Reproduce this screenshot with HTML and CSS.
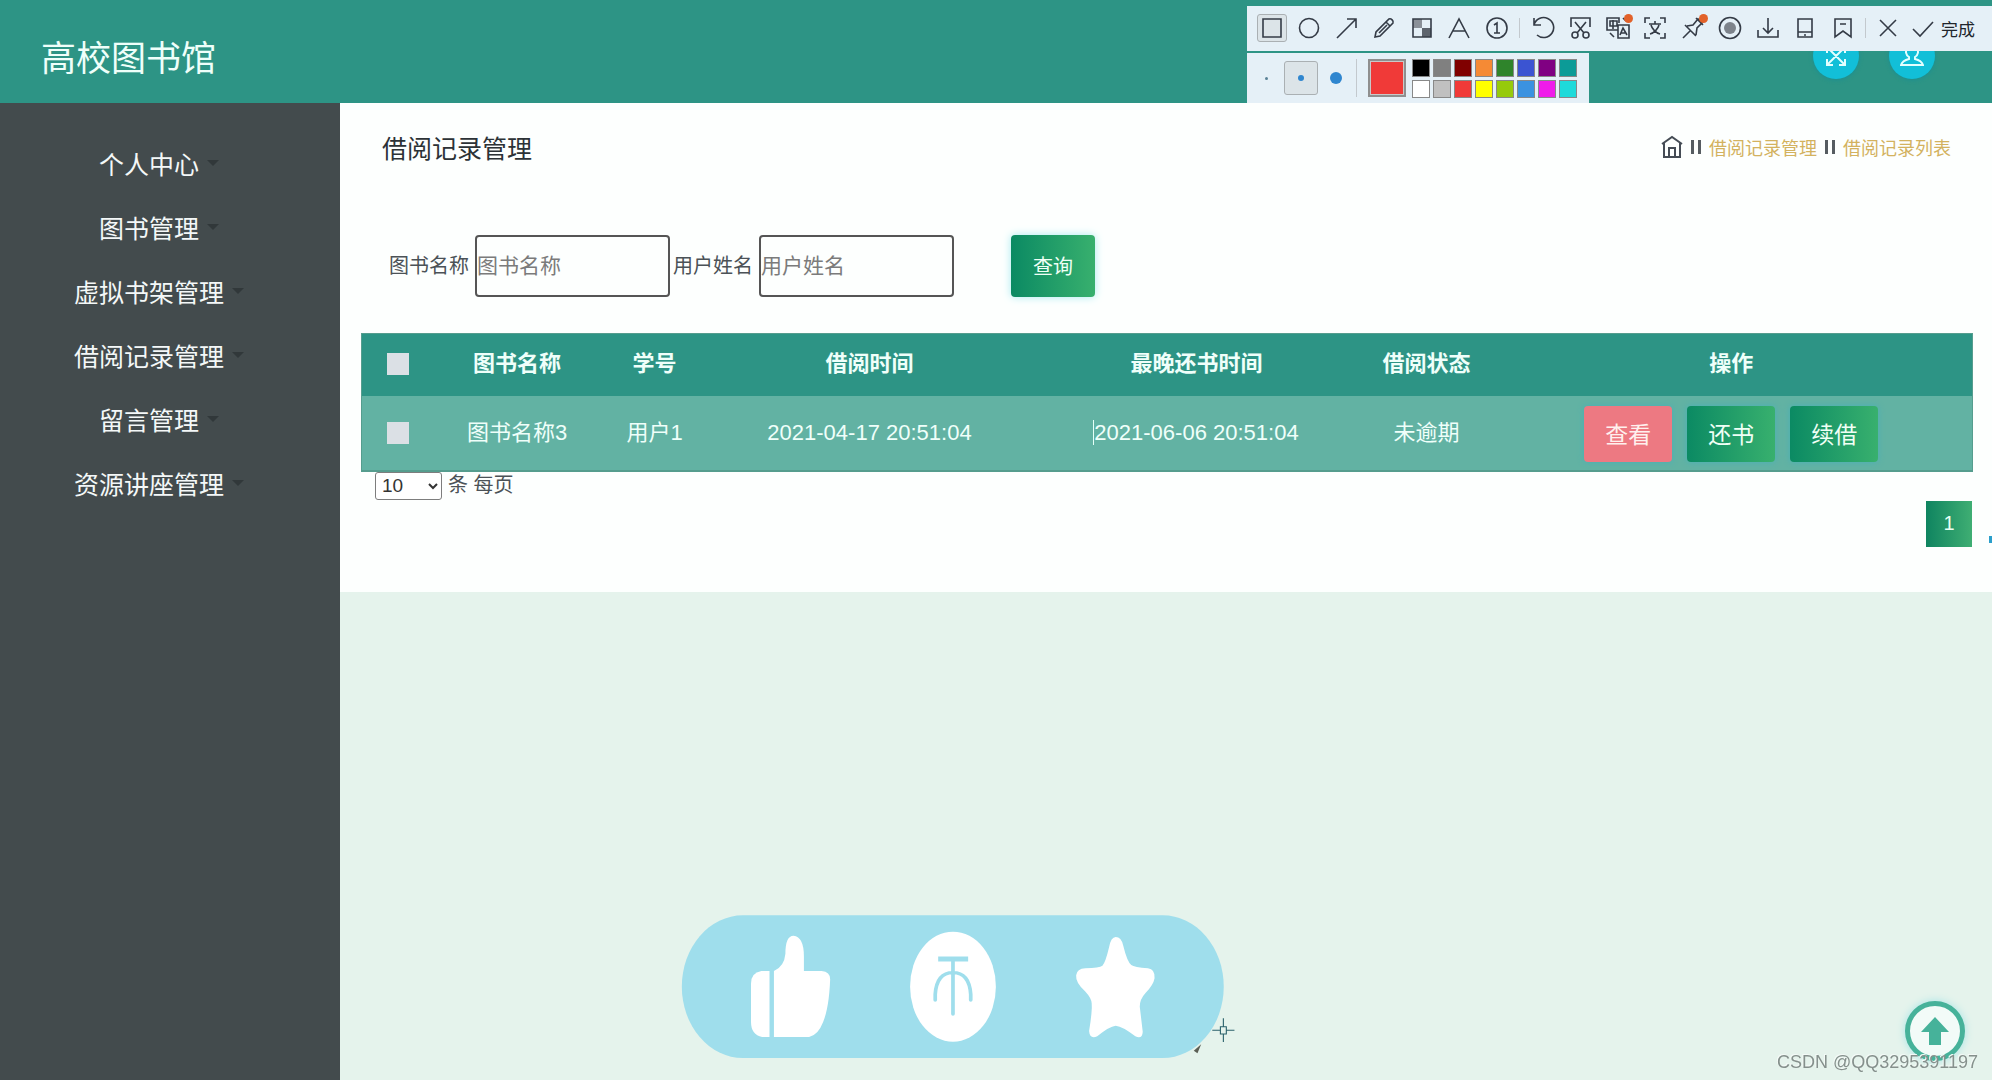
FILE: index.html
```html
<!DOCTYPE html>
<html lang="zh-CN">
<head>
<meta charset="utf-8">
<title>高校图书馆</title>
<link rel="stylesheet" href="styles.css">
</head>
<body>
<header class="topbar">
  <h1 class="brand">高校图书馆</h1>
  <div class="top-actions">
    <button class="round" type="button" aria-label="全屏"><svg width="24" height="24" viewBox="0 0 24 24"><path d="M3 3l18 18M21 3L3 21M3 9V3h6M15 3h6v6M3 15v6h6M15 21h6v-6"/></svg></button>
    <button class="round" type="button" aria-label="用户"><svg width="24" height="24" viewBox="0 0 24 24"><path d="M9 13a6 6 0 1 1 6 0v2c4 1 7 3 8 6H1c1-3 4-5 8-6z"/></svg></button>
  </div>
</header>

<div class="layout">
  <nav class="sidebar">
    <a class="menu-item" href="#">个人中心<span class="caret"></span></a>
    <a class="menu-item" href="#">图书管理<span class="caret"></span></a>
    <a class="menu-item" href="#">虚拟书架管理<span class="caret"></span></a>
    <a class="menu-item" href="#">借阅记录管理<span class="caret"></span></a>
    <a class="menu-item" href="#">留言管理<span class="caret"></span></a>
    <a class="menu-item" href="#">资源讲座管理<span class="caret"></span></a>
  </nav>

  <main class="content">
    <div class="page-head">
      <h2 class="page-title">借阅记录管理</h2>
      <div class="crumbs">
        <a class="home" href="#" aria-label="首页"><svg width="22" height="24" viewBox="0 0 22 24"><path d="M1 9L11 2l10 7M3 8v14h16V8M8 22v-9h6v9"/></svg></a>
        <span class="bar"></span>
        <a href="#">借阅记录管理</a>
        <span class="bar"></span>
        <a href="#">借阅记录列表</a>
      </div>
    </div>

    <form class="search">
      <label for="book">图书名称</label>
      <input class="field" id="book" type="text" placeholder="图书名称">
      <label for="user">用户姓名</label>
      <input class="field" id="user" type="text" placeholder="用户姓名">
      <button class="btn query" type="button">查询</button>
    </form>

    <table class="records">
      <colgroup><col class="c-check"><col class="c-book"><col class="c-no"><col class="c-start"><col class="c-due"><col class="c-state"><col class="c-ops"></colgroup>
      <thead>
        <tr>
          <th><input class="tick" type="checkbox" aria-label="全选"></th>
          <th>图书名称</th><th>学号</th><th>借阅时间</th><th>最晚还书时间</th><th>借阅状态</th><th>操作</th>
        </tr>
      </thead>
      <tbody>
        <tr>
          <td><input class="tick" type="checkbox" aria-label="选择图书名称3"></td>
          <td>图书名称3</td><td>用户1</td><td>2021-04-17 20:51:04</td>
          <td><span class="editing">2021-06-06 20:51:04</span></td>
          <td>未逾期</td>
          <td>
            <div class="ops">
              <button class="btn view" type="button">查看</button>
              <button class="btn" type="button">还书</button>
              <button class="btn" type="button">续借</button>
            </div>
          </td>
        </tr>
      </tbody>
    </table>

    <div class="page-size">
      <select id="size"><option>10</option><option>20</option><option>50</option></select>
      <label for="size">条 每页</label>
    </div>
    <div class="pager"><button class="page-no" type="button">1</button></div>
  </main>
</div>

<section class="shot-tools" aria-label="截图工具">
  <div class="tools">
    <button class="tool on" type="button" aria-label="矩形"><svg viewBox="0 0 24 24"><path d="M3 3h18v18H3z"/></svg></button>
    <button class="tool" type="button" aria-label="椭圆"><svg viewBox="0 0 24 24"><circle cx="12" cy="12" r="9.500"/></svg></button>
    <button class="tool" type="button" aria-label="箭头"><svg viewBox="0 0 24 24"><path d="M2 22L21 3M12 3h9v9"/></svg></button>
    <button class="tool" type="button" aria-label="画笔"><svg viewBox="0 0 24 24"><path d="M3 21l1-5L17 3c2-1 5 2 4 4L8 20zM14 6l4 4M7 17l8-8"/></svg></button>
    <button class="tool" type="button" aria-label="马赛克"><svg viewBox="0 0 24 24"><path class="shade" d="M3 3h9v9H3z"/><path class="dark" d="M12 12h9v9h-9z"/><path d="M3 3h18v18H3z"/></svg></button>
    <button class="tool" type="button" aria-label="文字"><svg viewBox="0 0 24 24"><path d="M2 22L12 3l10 19M6 15h12"/></svg></button>
    <button class="tool" type="button" aria-label="序号"><svg viewBox="0 0 24 24"><circle cx="12" cy="12" r="10"/><path d="M9 9l3-2v10M9 17h6"/></svg></button>
    <span class="sep"></span>
    <button class="tool" type="button" aria-label="撤销"><svg viewBox="0 0 24 24"><path d="M3 2v7h7M3 9a10 10 0 1 1 3 10"/></svg></button>
    <button class="tool" type="button" aria-label="截长图"><svg viewBox="0 0 24 24"><path d="M3 11V2h19v9M7 6l9 11M18 6L9 17"/><circle cx="7" cy="19" r="3"/><circle cx="18" cy="19" r="3"/></svg></button>
    <button class="tool" type="button" aria-label="翻译"><svg viewBox="0 0 24 24"><path d="M12 14H1V2h12v5M4 5h7v5H4zM7 4v9M12 9h11v13H12zM14 19l3-7 4 7M15 17h4M4 17l4 4M17 2l3 3"/></svg><span class="dot"></span></button>
    <button class="tool" type="button" aria-label="识别文字"><svg viewBox="0 0 24 24"><path d="M2 7V2h5M17 2h5v5M2 17v5h5M17 22h5v-5M6 8h12M12 5v3M8 9c1 4 5 8 9 9M16 9c-1 4-5 8-9 9"/></svg></button>
    <button class="tool" type="button" aria-label="钉住"><svg viewBox="0 0 24 24"><path d="M2 22l8-8M4 9l11 11M6 10l6-1 5-6 4 4-5 5-1 7M15 2l7 7"/></svg><span class="dot"></span></button>
    <button class="tool" type="button" aria-label="录屏"><svg viewBox="0 0 24 24"><circle cx="12" cy="12" r="10.500"/><circle class="solid" cx="12" cy="12" r="6"/></svg></button>
    <button class="tool" type="button" aria-label="保存"><svg viewBox="0 0 24 24"><path d="M12 2v14M7 12l5 5 5-5M2 14v7h20v-7"/></svg></button>
    <button class="tool" type="button" aria-label="发送到手机"><svg viewBox="0 0 24 24"><path d="M5 3h14v18H5zM5 16h14M11 19h2"/></svg></button>
    <button class="tool" type="button" aria-label="收藏"><svg viewBox="0 0 24 24"><path d="M4 3h16v18l-8-6-8 6zM9 8h6"/></svg></button>
    <span class="sep"></span>
    <button class="tool" type="button" aria-label="取消"><svg viewBox="0 0 24 24"><path d="M4 4l16 16M20 4L4 20"/></svg></button>
    <button class="done" type="button"><svg viewBox="0 0 24 24"><path d="M2 13l7 7L22 6"/></svg>完成</button>
  </div>
  <div class="palette">
    <button class="pen fine" type="button" aria-label="细"></button>
    <button class="pen medium" type="button" aria-label="中"></button>
    <button class="pen thick" type="button" aria-label="粗"></button>
    <span class="sep"></span>
    <span class="current"></span>
    <div class="swatches">
      <button class="k1" type="button" aria-label="黑"></button><button class="k2" type="button" aria-label="灰"></button><button class="k3" type="button" aria-label="深红"></button><button class="k4" type="button" aria-label="橙"></button><button class="k5" type="button" aria-label="绿"></button><button class="k6" type="button" aria-label="蓝"></button><button class="k7" type="button" aria-label="紫"></button><button class="k8" type="button" aria-label="青"></button>
      <button class="k9" type="button" aria-label="白"></button><button class="k10" type="button" aria-label="浅灰"></button><button class="k11" type="button" aria-label="红"></button><button class="k12" type="button" aria-label="黄"></button><button class="k13" type="button" aria-label="浅绿"></button><button class="k14" type="button" aria-label="浅蓝"></button><button class="k15" type="button" aria-label="品红"></button><button class="k16" type="button" aria-label="浅青"></button>
    </div>
  </div>
</section>

<span class="edge-mark"></span>

<svg class="triple" viewBox="0 0 1568 510" preserveAspectRatio="none" role="img" aria-label="点赞 投币 收藏">
  <rect x="32" y="46" width="1465" height="428" rx="165" ry="214" fill="#9fdeec"/>
  <g fill="#fff">
    <path d="M269 213h-22q-28 5-28 38v115q0 38 30 45h20z"/>
    <path d="M281 213q28-14 31-52 0-54 22-54 28 3 28 62v44h48q23 2 23 25-3 85-19 128-14 40-38 45h-95z"/>
    <ellipse cx="765" cy="260" rx="116" ry="165"/>
    <path d="M1205 111q15 0 20 25 11 50 22 59 8 7 45 10 20 3 18 30-3 20-25 45-15 18-15 40l8 75q-1 24-20 14-34-30-53-32-18 2-50 32-20 10-22-16 9-60 7-83-1-16-18-36-26-26-24-48 2-20 25-21 38-2 46-8 8-8 18-55 5-31 18-31z"/>
  </g>
  <g fill="none" stroke="#9fdeec" stroke-width="10" stroke-linecap="round">
    <path d="M725 177h81" stroke-width="15" stroke-linecap="butt"/>
    <path d="M765 180v162M717 300v-17q4-65 48-65t48 65v17"/>
  </g>
  <path d="M1416 452l20-19-10 27z" fill="#5b5f55"/>
  <path d="M1466 391h22M1504 391h22M1496 355v24M1496 402v24M1488 380h16v22h-16z" fill="none" stroke="#2b626b" stroke-width="3"/>
</svg>

<a class="to-top" href="#" aria-label="返回顶部"><svg width="28" height="28" viewBox="0 0 28 28"><path d="M14 0l14 15h-8v13H8V15H0z" fill="#46b29a"/></svg></a>
<span class="watermark">CSDN @QQ3295391197</span>
</body>
</html>
```
FILE: styles.css
```css
* { box-sizing: border-box; }

body {
  margin: 0;
  min-height: 100vh;
  display: flex;
  flex-direction: column;
  background: #e5f3ec;
  color: #4b5257;
  font-family: "Liberation Sans", "Noto Sans CJK SC", sans-serif;
  font-size: 20px;
}

button { font-family: inherit; padding: 0; border: 0; background: none; cursor: pointer; }
a { text-decoration: none; color: inherit; }

.topbar {
  height: 103px;
  padding: 8px 57px 0 41px;
  display: flex;
  justify-content: space-between;
  align-items: center;
  background: #2d9485;
}
.brand { margin: 0; font-size: 35px; font-weight: 400; color: #effffa; }
.top-actions { display: flex; gap: 30px; }
.round {
  width: 46px;
  height: 46px;
  border-radius: 50%;
  background: #12bfd8;
  box-shadow: 0 1px 4px #1b8f92;
  display: grid;
  place-items: center;
}
.round svg { fill: none; stroke: #e4ffff; stroke-width: 2; }

.layout { flex: 1; display: grid; grid-template-columns: 340px 1fr; align-items: start; }

.sidebar {
  align-self: stretch;
  padding: 28px 22px 0 0;
  background: #434b4d;
}
.menu-item {
  height: 64px;
  display: flex;
  justify-content: center;
  align-items: center;
  gap: 8px;
  font-size: 25px;
  color: #f4f8f8;
}
.caret { border: 6px solid transparent; border-top-color: #31383a; border-bottom: 0; }

.content { min-height: 489px; padding: 24px 20px 0 21px; background: #fdfffe; }
.page-head {
  height: 40px;
  padding: 0 22px 0 21px;
  display: flex;
  justify-content: space-between;
  align-items: center;
}
.page-title { margin: 0; font-size: 25px; font-weight: 400; color: #2c3236; }
.crumbs { display: flex; align-items: center; gap: 8px; font-size: 18px; color: #d3b25f; }
.home { display: flex; }
.home svg { fill: none; stroke: #454c55; stroke-width: 2; }
.bar { width: 10px; height: 14px; border: solid #565c61; border-width: 0 3px; }

.search { margin: 68px 0 36px 28px; display: flex; align-items: center; }
.search label { padding-bottom: 3px; font-size: 20px; }
.field {
  width: 195px;
  height: 62px;
  margin: 0 3px 0 6px;
  padding: 0;
  border: 2px solid #555;
  border-radius: 4px;
  background: #fdfffe;
  font: 21px "Liberation Sans", "Noto Sans CJK SC", sans-serif;
}
.field::placeholder { color: #7b7b7b; }

.btn {
  width: 88px;
  height: 56px;
  border-radius: 4px;
  background: linear-gradient(90deg, #0b8a63, #38b06e);
  box-shadow: 0 0 6px #48b0b8;
  padding-bottom: 2px;
  color: #effff5;
  font-size: 23px;
}
.query { width: 84px; height: 62px; margin-left: 54px; font-size: 20px; box-shadow: 0 0 8px #a8eaf0; }
.view { background: #ed7982; color: #fff0ee; }

.records {
  width: 100%;
  table-layout: fixed;
  border-collapse: collapse;
  border: 1px solid #559d8e;
  border-bottom-width: 2px;
  font-size: 22px;
  text-align: center;
  color: #effffa;
}
.c-check { width: 72px; }
.c-book { width: 167px; }
.c-no { width: 108px; }
.c-start { width: 322px; }
.c-due { width: 332px; }
.c-state { width: 128px; }
.c-ops { width: 482px; }
.records th, .records td { padding: 0; line-height: 24px; vertical-align: middle; }
.records th { height: 62px; padding-bottom: 2px; background: #2d9485; }
.records td { height: 75px; background: #62b2a3; }
.tick {
  appearance: none;
  display: block;
  width: 22px;
  height: 22px;
  margin: 0 auto;
  background: #dbe0e5;
}
.editing { position: relative; }
.editing::before { content: ""; position: absolute; left: -1px; top: 0; bottom: 0; width: 1px; background: #e6fff8; }
.ops { display: flex; justify-content: center; gap: 15px; padding-top: 2px; }

.page-size { height: 29px; padding-left: 14px; display: flex; align-items: start; gap: 6px; }
.page-size label { line-height: 26px; }
.page-size select {
  width: 67px;
  height: 28px;
  padding-left: 2px;
  border: 1px solid #7d7d7d;
  border-radius: 3px;
  background: #fff;
  color: #333;
  font: 19px "Liberation Sans", sans-serif;
}
.pager { display: flex; justify-content: flex-end; padding-right: 1px; }
.page-no {
  width: 46px;
  height: 46px;
  background: linear-gradient(90deg, #0f8460, #3fae73);
  color: #e9fff4;
  font-size: 20px;
}

/* Floating screenshot toolbar */
.shot-tools { position: absolute; top: 6px; right: 0; width: 745px; display: grid; gap: 2px; }
.tools {
  height: 45px;
  padding: 0 17px 1px 10px;
  display: flex;
  justify-content: space-between;
  align-items: center;
  background: #e5f0f7;
}
.tool { position: relative; width: 30px; height: 28px; display: grid; place-items: center; }
.tools svg { width: 24px; height: 24px; fill: none; stroke: #343b46; stroke-width: 1.6; }
.tools .shade { fill: #8a9098; stroke: none; }
.tools .dark { fill: #5d646d; stroke: none; }
.tools .solid { fill: #7d838b; stroke: none; }
.on, .medium { border: 1px solid #aab0b3; border-radius: 3px; background: #dce4e8; }
.dot { position: absolute; top: 0; right: 0; width: 9px; height: 9px; border-radius: 50%; background: #e2622a; }
.sep { width: 1px; height: 20px; background: #c3c9ce; }
.done { width: 64px; display: flex; align-items: center; justify-content: space-between; font-size: 17px; color: #20252b; white-space: nowrap; }
.palette {
  width: 342px;
  height: 50px;
  padding-left: 4px;
  display: flex;
  align-items: center;
  gap: 3px;
  background: #e5f0f7;
}
.palette .sep { height: 38px; margin: 0 8px 0 2px; }
.pen { width: 30px; height: 34px; display: grid; place-items: center; }
.pen::before { content: ""; width: 6px; height: 6px; border-radius: 50%; background: #2f86cf; }
.fine::before { width: 3px; height: 3px; background: #5a8296; }
.medium { width: 34px; }
.thick::before { width: 12px; height: 12px; }
.current { width: 38px; height: 38px; margin-right: 3px; border: 2px solid #8f8f8f; outline: 1px solid #c9c9c9; outline-offset: -3px; background: #f03a38; }
.swatches { display: grid; grid-template-columns: repeat(8, 18px); gap: 3px; }
.swatches button { height: 18px; border: 1px solid #888; }
.k1 { background: #000; }
.k2 { background: #808080; }
.k3 { background: #800000; }
.k4 { background: #f58a35; }
.k5 { background: #2f842b; }
.k6 { background: #3b54d2; }
.k7 { background: #800082; }
.k8 { background: #0c9b97; }
.k9 { background: #fff; }
.k10 { background: #c0c0c0; }
.k11 { background: #f03a38; }
.k12 { background: #ff0; }
.k13 { background: #96ca0b; }
.k14 { background: #3b92e0; }
.k15 { background: #ef1cea; }
.k16 { background: #1edada; }

/* Overlays */
.edge-mark { position: absolute; top: 536px; right: 0; width: 3px; height: 7px; background: #2b9fcb; }
.triple { position: fixed; left: 670px; bottom: 10px; width: 580px; height: 170px; }
.to-top {
  position: fixed;
  right: 27px;
  bottom: 19px;
  width: 60px;
  height: 60px;
  border: 5px solid #46b29a;
  border-radius: 50%;
  background: #f2fbf8;
  box-shadow: 0 0 8px #a5e4e6;
  display: grid;
  place-items: center;
}
.watermark {
  position: fixed;
  right: 14px;
  bottom: 7px;
  font-size: 18px;
  color: #85908c;
  text-shadow: -1px -1px 0 #f4faf7;
}
```
